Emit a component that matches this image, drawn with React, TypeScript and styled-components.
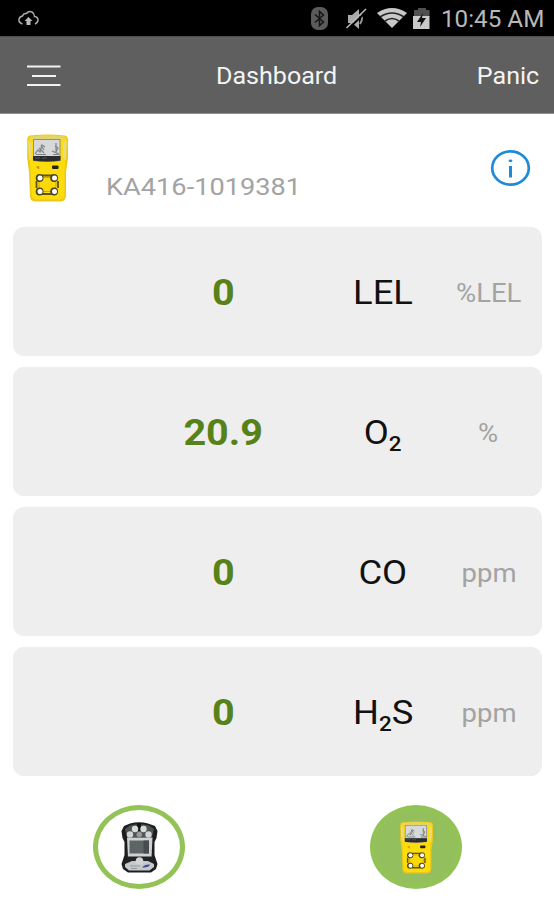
import React from "react";
import styled, { createGlobalStyle } from "styled-components";

const GlobalStyle = createGlobalStyle`
  * { box-sizing: border-box; }
  body {
    margin: 0;
    background: #fff;
    font-family: Roboto, "Liberation Sans", sans-serif;
  }
`;

const Screen = styled.div`
  width: 554px;
  height: 900px;
  display: flex;
  flex-direction: column;
  background: #fff;
  overflow: hidden;
`;

/* Roboto drawn slightly wide, as the app renders all of its labels. */
const Label = styled.span<{
  $size: number;
  $color: string;
  $weight?: number;
  $stretch?: number;
  $origin?: string;
  $drop?: number;
}>`
  display: inline-block;
  white-space: nowrap;
  line-height: 1;
  font-size: ${(p) => p.$size}px;
  font-weight: ${(p) => p.$weight ?? 400};
  color: ${(p) => p.$color};
  transform: translateY(${(p) => p.$drop ?? 0}px) scaleX(${(p) => p.$stretch ?? 1.1});
  transform-origin: ${(p) => p.$origin ?? "center"};
`;

const StatusBar = styled.div`
  height: 36px;
  flex: none;
  display: flex;
  align-items: center;
  justify-content: space-between;
  background: #000;
  padding: 0 10px 0 17px;
`;

const StatusRight = styled.div`
  display: flex;
  align-items: center;
  padding-top: 1px;
`;

const StatusIcons = styled.svg`
  display: block;
  width: 128px;
  height: 26px;
  margin-right: 12px;
`;

const CloudIcon = styled.svg`
  width: 24px;
  height: 18px;
`;

const Header = styled.header`
  height: 78px;
  flex: none;
  display: grid;
  grid-template-columns: 1fr auto 1fr;
  align-items: center;
  background: #5f5f5f;
  border-top: 1px solid #4d4d4d;
  border-bottom: 1px solid #8c8c8c;
  padding: 0 15px;
`;

const HeaderSide = styled.div<{ $end?: boolean }>`
  display: flex;
  justify-content: ${(p) => (p.$end ? "flex-end" : "flex-start")};
  padding-left: ${(p) => (p.$end ? 0 : 12)}px;
`;

const MenuIcon = styled.svg`
  width: 34px;
  height: 24px;
`;

const DeviceRow = styled.section`
  height: 113px;
  flex: none;
  display: flex;
  align-items: flex-start;
  padding: 20px 23px 0 27px;
`;

const DeviceSvg = styled.svg<{ $w: number; $h: number }>`
  display: block;
  flex: none;
  width: ${(p) => p.$w}px;
  height: ${(p) => p.$h}px;
`;

const Serial = styled.div`
  flex: 1;
  padding: 41px 0 0 38px;
`;

const InfoIcon = styled.svg`
  width: 41px;
  height: 38px;
  margin-top: 15px;
`;

const Readings = styled.main`
  display: grid;
  grid-auto-rows: 128.5px;
  row-gap: 11.5px;
  padding: 0 12px 0 12.5px;
`;

const Card = styled.article`
  display: grid;
  grid-template-columns: 200px 120px 91px;
  align-items: center;
  justify-items: center;
  padding: 3px 0 0 110.5px;
  border-radius: 11px;
  background: #eee;
`;

const Sub = styled.span`
  display: inline-block;
  font-size: 21px;
  font-weight: 500;
  line-height: 1;
  transform: translateY(7px);
`;

const Switcher = styled.nav`
  display: flex;
  justify-content: space-between;
  padding: 29.5px 92px 0 93px;
`;

const Bubble = styled.div<{ $active?: boolean }>`
  width: 92px;
  height: 84px;
  display: flex;
  align-items: center;
  justify-content: center;
  border-radius: 50%;
  border: 5px solid #93c357;
  background: ${(p) => (p.$active ? "#93c05c" : "#fff")};
`;

function YellowDetector({ w, h }: { w: number; h: number }) {
  return (
    <DeviceSvg $w={w} $h={h} viewBox="0 0 41 68" preserveAspectRatio="none">
      <path d="M3 1.500Q20-.5 38 1.500Q41 2 41 6V24L39 38V62Q38.500 67 34 67.500H8Q3 67 3 62L2 38L.2 24V6Q.2 2 3 1.500Z" fill="#ecc81d" />
      <path d="M4 2.500Q20 .5 37 2.500Q40 3 39.500 7L37.500 38V61Q37 65 33.500 65.500H9Q5 65 4.500 61L3.500 38L1.500 7Q1 3 4 2.500Z" fill="#fcdc0a" />
      <path d="M3.500 2.500Q20 .5 37.500 2.500L38.500 6H2.500Z" fill="#e3d46a" />
      <path d="M1 7L4.500 9V24L2 26ZM40 7L36 9V24L39 26Z" fill="#ecdc78" />
      <path d="M6 5H33.500V27Q20 29 6 27Z" fill="#8d908c" />
      <path d="M7 6H32.500V22H7Z" fill="#d6d8da" />
      <path d="M6 22H33.500V26.500Q20 28.500 6 26.500Z" fill="#2b2c2d" />
      <path d="M8 20L11 16L13 18L15 11L18 13M12 14L17 19M14 11L17 16M9 20.500H19M29 9V19M28 12L31 14L29 18M25 17L32 20M26 20.500H32" stroke="#808486" strokeWidth="1.200" fill="none" />
      <path d="M8 24H13M15 24H20" stroke="#55585a" strokeWidth="1" />
      <path d="M9.500 33H11.500V35" stroke="#c09010" strokeWidth="1.400" fill="none" />
      <rect x="25" y="31.500" width="6.500" height="3.500" rx="1" fill="#25241b" />
      <path d="M15 41.500H25M15 60H25M9.500 47V54M31 47V54" stroke="#5e541a" strokeWidth="1.800" fill="none" />
      <path d="M16.500 43.500H24L29 48V53L24 57.500H16.500L12 53V48Z" stroke="#b99d16" fill="#fbd808" strokeWidth=".8" />
      {[13, 27.5].map((x) =>
        [44, 57.5].map((y) => (
          <g key={`${x}-${y}`}>
            <circle cx={x - 0.4} cy={y} r="3.900" fill="#4d451b" />
            <circle cx={x} cy={y} r="2.500" fill="#fff" />
          </g>
        ))
      )}
    </DeviceSvg>
  );
}

function BlackDetector() {
  return (
    <DeviceSvg $w={37} $h={51} viewBox="0 0 37 51" preserveAspectRatio="none">
      <path d="M9 1.500Q18-1 27 1.500L34 4L36.500 9L35.500 16L33.500 20V33L36.500 42L35 47L30 50.500H7L2 47L.5 42L3.500 33V20L1.500 16L.5 9L3 4Z" fill="#1d1e20" />
      <path d="M9 3.500Q18 1 28 3.500L33 7L31 15H6L4 7Z" fill="#505355" />
      <path d="M16 1H20V9H16Z" fill="#151515" />
      <path d="M6 15.500H31.500L30.500 36H7Z" fill="#d0d2d2" />
      <rect x="8.500" y="18.500" width="19.500" height="13" fill="#5d6466" />
      <path d="M22.500 18.500H28V31.500H22.500Z" fill="#464c4f" />
      <path d="M6 34.500H32V40H6Z" fill="#202224" />
      <path d="M4 42L11 39H27L33 42V45L28.500 48.500H8L4 45Z" fill="#c6c8ca" />
      <circle cx="14" cy="7" r="3.200" fill="#d9dbdb" />
      <circle cx="22.500" cy="7" r="3.200" fill="#d9dbdb" />
      <circle cx="9" cy="12.500" r="3.200" fill="#d1d3d4" />
      <circle cx="18.300" cy="12.500" r="2.800" fill="#969a9b" />
      <circle cx="27.500" cy="12.500" r="3.200" fill="#d1d3d4" />
      <circle cx="18.500" cy="39" r="3.800" fill="#d3d4d4" />
      <path d="M21 45.500Q24 42 29 42.500Q28 46 21 45.500Z" fill="#4147a2" />
      <path d="M9 44H19M10 46.500H16" stroke="#96999c" strokeWidth="1" />
    </DeviceSvg>
  );
}

const readings = [
  { value: "0", gas: "LEL", unit: "%LEL" },
  { value: "20.9", gas: <>O<Sub>2</Sub></>, unit: "%" },
  { value: "0", gas: "CO", unit: "ppm" },
  { value: "0", gas: <>H<Sub>2</Sub>S</>, unit: "ppm" },
];

export default function App() {
  return (
    <Screen>
      <GlobalStyle />
      <StatusBar>
        <CloudIcon viewBox="0 0 24 18" fill="none">
          <path d="M5.500 15Q1.500 13.500 2 10.500Q2.500 7.500 5.500 7Q6.500 4 9.500 4.500Q11.500 1.500 15 3Q17.500 4.500 17.500 7.500Q21 8 21 11Q21 13.500 18 15" stroke="#aaa" strokeWidth="1.500" />
          <path d="M11.500 8L15.500 12H13.500V16H9.500V12H7.500Z" fill="#bbb" />
        </CloudIcon>
        <StatusRight>
          <StatusIcons viewBox="0 0 128 26" fill="none">
            <rect x="9" y="1" width="17" height="23" rx="7" fill="#5b5b5b" />
            <path d="M13 8.500L21.500 16L17.500 19.500V5.500L21.500 9L13 16.500" stroke="#151515" strokeWidth="1.500" />
            <path d="M46 9H50L57 3V23L50 17H46Z" fill="#aaa" />
            <path d="M58 8Q62 12 58 18" stroke="#999" strokeWidth="2" />
            <path d="M45.500 23.500L65 5" stroke="#000" strokeWidth="2" />
            <path d="M44.500 22L64 3" stroke="#bbb" strokeWidth="1.500" />
            <path d="M75 7Q90-3 105 7L90 22Z" fill="#c8c8c8" />
            <path d="M78 11Q90 3 102 11M83 15Q90 10 97 15" stroke="#222" strokeWidth="1.600" />
            <path d="M112 4H116V2H124V4H127.500V11H112Z" fill="#505050" />
            <path d="M111 10H127.500V23H111Z" fill="#c9c9c9" />
            <path d="M121 7L115 16H119L118 21L124 12H120Z" fill="#111" />
          </StatusIcons>
          <Label $size={24} $color="#b8b8b8" $stretch={1.01} $origin="right">10:45 AM</Label>
        </StatusRight>
      </StatusBar>

      <Header>
        <HeaderSide>
          <MenuIcon viewBox="0 0 34 24" fill="none" stroke="#f2f2f2" strokeWidth="2.200">
            <path d="M0 3.500H33.500M5 13H29M0 22H33.500" />
          </MenuIcon>
        </HeaderSide>
        <Label $size={23} $color="#f4f4f4" $stretch={1.09} $drop={1}>Dashboard</Label>
        <HeaderSide $end>
          <Label $size={23} $color="#f4f4f4" $stretch={1.09} $drop={1} $origin="right">Panic</Label>
        </HeaderSide>
      </Header>

      <DeviceRow>
        <YellowDetector w={41} h={68} />
        <Serial>
          <Label $size={24.5} $color="#a3a3a3" $stretch={1.11} $origin="left">KA416-1019381</Label>
        </Serial>
        <InfoIcon viewBox="0 0 41 38" fill="none" stroke="#1e8bd8">
          <ellipse cx="20.500" cy="19" rx="18.300" ry="16.700" strokeWidth="2.700" />
          <path d="M20.500 17V28.500" strokeWidth="3" />
          <ellipse cx="20.500" cy="11.800" rx="1.900" ry="1.400" fill="#1e8bd8" stroke="none" />
        </InfoIcon>
      </DeviceRow>

      <Readings>
        {readings.map((r, i) => (
          <Card key={i}>
            <Label $size={36} $color="#57821a" $weight={700} $stretch={1.1}>{r.value}</Label>
            <Label $size={34} $color="#111" $stretch={1.07} $drop={-1}>{r.gas}</Label>
            <Label $size={25} $color="#a3a3a3" $drop={1}>{r.unit}</Label>
          </Card>
        ))}
      </Readings>

      <Switcher>
        <Bubble><BlackDetector /></Bubble>
        <Bubble $active><YellowDetector w={33} h={53} /></Bubble>
      </Switcher>
    </Screen>
  );
}
